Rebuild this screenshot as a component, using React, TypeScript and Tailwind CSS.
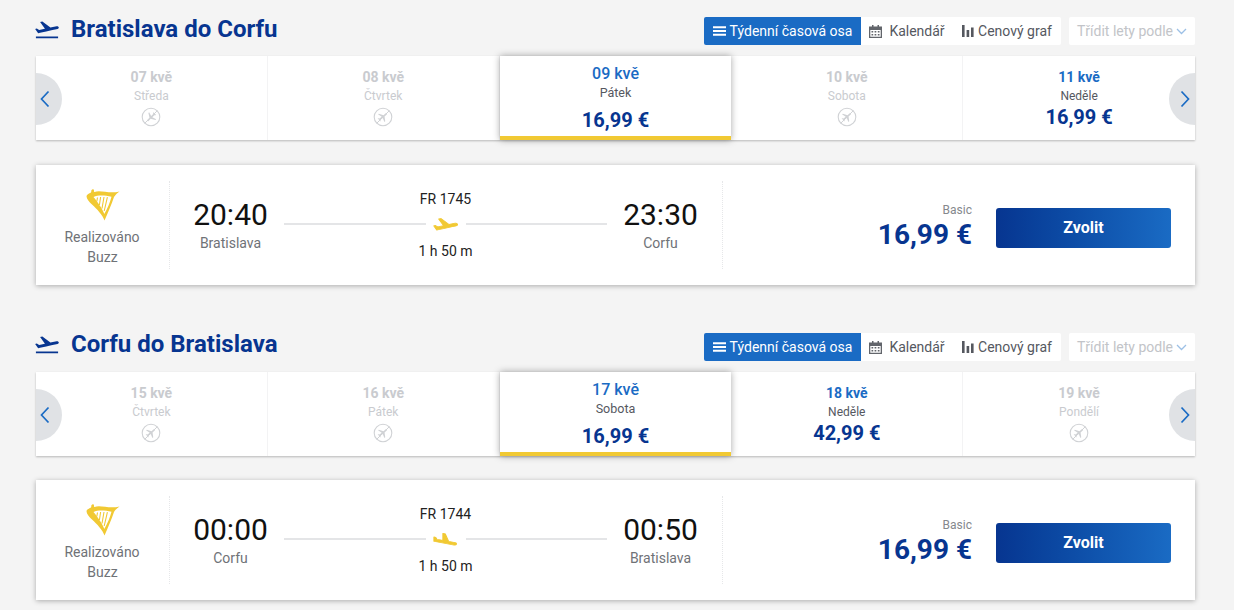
import React from "react";

const F = "font-['Roboto',sans-serif]";

function Harp() {
  return (
    <svg width="34" height="34" viewBox="0 0 34 34" fill="none">
      <path d="M0.5 9 C1 7.5 3 6.5 5 5.5 C5.5 4.5 5 3.7 5.6 2.9 C6.4 1.9 8 2.2 8 3.5 C8 4.2 7.6 4.7 8.6 5 C14 2.6 24 7.2 33.5 4.4 C31 6.2 29.5 7.6 28 10 C25.5 17.5 22 25.5 18.5 33.5 C16.5 28 11 22 6 17.5 C3 14.8 0.5 12 0.5 9Z" fill="#f1c933" />
      <path d="M7.5 10 C12 7.8 19 8.2 25.5 9.8 C24 15.5 21.5 21.5 18.3 27 C16.5 22 12 15.5 7.5 10Z" fill="#fff" />
      <path d="M11.5 10.5 L10.8 14.5 M14.6 10 L13.4 18 M18 10 L16 21.5 M21.4 10.2 L18.2 24" stroke="#f1c933" strokeWidth="1.1" />
    </svg>
  );
}

function PlaneTakeoff({ color }: { color: string }) {
  return (
    <svg width="28" height="23" viewBox="0 0 24 24" preserveAspectRatio="none" fill={color} className="ml-[-3px]">
      <path d="M2.5 19.4h19v1.6h-19zm19.57-9.76c-.21-.8-1.04-1.28-1.84-1.06L14.92 10l-6.9-6.43-1.93.51 4.14 7.17-4.97 1.33-1.97-1.54-1.45.39 1.82 3.16.77 1.33 1.6-.43 5.31-1.42 4.35-1.16L21 11.49c.81-.23 1.28-1.05 1.07-1.85z" />
    </svg>
  );
}

function YellowPlane({ down }: { down?: boolean }) {
  return down ? (
    <svg width="25" height="13" viewBox="2 1.5 20.5 15.5" preserveAspectRatio="none" fill="#f1c933" stroke="#f1c933" strokeWidth="0.9" strokeLinejoin="round">
      <path d="M9.68 13.27l4.35 1.16 5.31 1.42c.8.21 1.62-.26 1.84-1.06.21-.8-.26-1.62-1.06-1.84l-5.31-1.42-2.76-9.02L10.12 2v8.28L5.15 8.95l-.93-2.32-1.45-.39v5.17l1.6.43 5.31 1.43z" />
    </svg>
  ) : (
    <svg width="25" height="13" viewBox="1.2 3 21.4 14" preserveAspectRatio="none" fill="#f1c933" stroke="#f1c933" strokeWidth="0.9" strokeLinejoin="round">
      <path d="M22.07 9.64c-.21-.8-1.04-1.28-1.84-1.06L14.92 10l-6.9-6.43-1.93.51 4.14 7.17-4.97 1.33-1.97-1.54-1.45.39 1.82 3.16.77 1.33 1.6-.43 5.31-1.42 4.35-1.16L21 11.49c.81-.23 1.28-1.05 1.07-1.85z" />
    </svg>
  );
}

function NoFlight({ rotate }: { rotate: number }) {
  return (
    <svg width="20" height="20" viewBox="0 0 20 20" fill="none" className="block">
      <circle cx="10" cy="10" r="8.8" stroke="#d0d2d5" strokeWidth="1.1" />
      <g transform={`rotate(${rotate} 10 10) translate(3.7 3.7) scale(0.525)`}>
        <path d="M21 16v-2l-8-5V3.5c0-.83-.67-1.5-1.5-1.5S10 2.67 10 3.5V9l-8 5v2l8-2.5V19l-2 1.5V22l3.5-1 3.5 1v-1.5L13 19v-5.5l8 2.5z" fill="#d0d2d5" />
      </g>
      <path d="M16.3 3.7 L3.7 16.3" stroke="#d0d2d5" strokeWidth="1" />
    </svg>
  );
}

type Day = { date: string; day: string; price?: string; active?: boolean; icon?: number };

function DayCell({ d, last }: { d: Day; last?: boolean }) {
  if (d.active) {
    return (
      <div className="relative z-10 flex flex-col items-center border-b-4 border-[#f1c933] bg-white shadow-[0_0_7px_rgba(0,0,0,0.35)]">
        <div className="mt-[8px] text-[16px] leading-[20px] font-medium text-[#1a6bc4]">{d.date}</div>
        <div className="mt-[1px] text-[12.5px] leading-[16px] text-[#55585f]">{d.day}</div>
        <div className="mt-[7px] text-[20px] leading-[24px] font-bold text-[#073590]">{d.price}</div>
      </div>
    );
  }
  const priced = !!d.price;
  return (
    <div className={`flex flex-col items-center bg-white ${last ? "" : "border-r border-[#f3f3f4]"}`}>
      <div className={`mt-[12px] text-[14px] leading-[18px] font-bold ${priced ? "text-[#1a6bc4]" : "text-[#c9cbcf]"}`}>{d.date}</div>
      <div className={`mt-[1px] text-[12px] leading-[18px] ${priced ? "text-[#55585f]" : "text-[#c9cbcf]"}`}>{d.day}</div>
      {priced ? (
        <div className="text-[20px] leading-[24px] font-bold text-[#073590]">{d.price}</div>
      ) : (
        <div className="mt-[2px]">
          <NoFlight rotate={d.icon ?? 50} />
        </div>
      )}
    </div>
  );
}

function Arrow({ right }: { right?: boolean }) {
  return (
    <div className={`absolute top-[17px] z-20 flex h-[52px] w-[26px] items-center bg-[#e0e2e5] ${right ? "right-0 justify-end rounded-l-[26px] pr-[4px]" : "left-0 justify-start rounded-r-[26px] pl-[3px]"}`}>
      <svg width="12" height="18" viewBox="0 0 12 18" fill="none" stroke="#1a6bc4" strokeWidth="1.7">
        {right ? <path d="M2.5 1.5 L9.5 9 L2.5 16.5" /> : <path d="M9.5 1.5 L2.5 9 L9.5 16.5" />}
      </svg>
    </div>
  );
}

function Toolbar() {
  return (
    <div className="flex items-center text-[14px] text-[#55585f]">
      <div className="flex h-[28px] w-[157px] items-center justify-center gap-[4px] rounded-l-[2px] bg-[#1a6bc4] text-white">
        <svg width="13" height="12" viewBox="0 0 13 12" fill="#fff"><path d="M0 1.2h13v2H0zM0 5h13v2H0zM0 8.8h13v2H0z" /></svg>
        <span>Týdenní časová osa</span>
      </div>
      <div className="flex h-[28px] w-[92px] items-center justify-center gap-[7px] bg-white">
        <svg width="13" height="13" viewBox="0 0 13 13" fill="#62656b"><path d="M3 0h1.5v1.5h4V0H10v1.5h3V13H0V1.5h3zM1.3 5v6.7h10.4V5zM2.5 6h1.7v1.5H2.5zM5.6 6h1.7v1.5H5.6zM8.8 6h1.7v1.5H8.8zM2.5 9h1.7v1.5H2.5zM5.6 9h1.7v1.5H5.6zM8.8 9h1.7v1.5H8.8z" /></svg>
        <span>Kalendář</span>
      </div>
      <div className="flex h-[28px] w-[108px] items-center justify-center gap-[4px] rounded-r-[2px] bg-white">
        <svg width="12" height="12" viewBox="0 0 12 12" fill="#55585f"><path d="M0 0h2.6v12H0zM4.6 5h2.6v7H4.6zM9 2.6h2.6V12H9z" /></svg>
        <span>Cenový graf</span>
      </div>
      <div className="ml-[8px] flex h-[28px] w-[126px] items-center justify-center gap-[3px] rounded-[2px] bg-white text-[#c2c4c8]">
        <span>Třídit lety podle</span>
        <svg width="11" height="7" viewBox="0 0 11 7" fill="none" stroke="#9cc0e6" strokeWidth="1.3"><path d="M1 1 L5.5 5.5 L10 1" /></svg>
      </div>
    </div>
  );
}

type Flight = { no: string; dep: string; arr: string; from: string; to: string; down?: boolean };

function FlightCard({ f }: { f: Flight }) {
  return (
    <div className={`flex h-[120px] items-center bg-white shadow-[0_1px_5px_rgba(0,0,0,0.3)] ${f.down ? "mt-[24px]" : "mt-[25px]"}`}>
      <div className="flex h-[88px] w-[134px] shrink-0 flex-col items-center border-r border-dotted border-[#e6e7e9] text-[14px] leading-[20px] text-[#6f7277]">
        <div className="my-[6px] h-[34px]"><Harp /></div>
        <div className="pr-[1px]">Realizováno</div>
        <div>Buzz</div>
      </div>
      <div className="flex h-[88px] w-[553px] shrink-0 items-start border-r border-dotted border-[#e6e7e9] pr-[24px] pl-[23px]">
        <div className="mt-[16px] w-[75px] text-center">
          <div className="text-[30px] leading-[36px] text-[#111]">{f.dep}</div>
          <div className="mt-[1px] text-[14px] leading-[18px] text-[#6f7277]">{f.from}</div>
        </div>
        <div className="mx-[16px] mt-[9px] flex flex-1 flex-col items-center text-[14px] text-[#222]">
          <div className="leading-[18px]">{f.no}</div>
          <div className="mt-[7px] flex h-[18px] w-full items-center">
            <div className="h-[2px] flex-1 bg-[#e4e5e7]" />
            <div className="flex w-[40px] justify-center"><YellowPlane down={f.down} /></div>
            <div className="h-[2px] flex-1 bg-[#e4e5e7]" />
          </div>
          <div className="mt-[9px] leading-[18px]">1 h 50 m</div>
        </div>
        <div className="mt-[16px] w-[75px] text-center">
          <div className="text-[30px] leading-[36px] text-[#111]">{f.arr}</div>
          <div className="mt-[1px] text-[14px] leading-[18px] text-[#6f7277]">{f.to}</div>
        </div>
      </div>
      <div className="flex h-[88px] flex-1 items-start justify-end pr-[24px]">
        <div className="mt-[22px] text-right">
          <div className="text-[12px] leading-[14px] text-[#85888d]">Basic</div>
          <div className="text-[28px] leading-[36px] font-bold text-[#073590]">16,99 €</div>
        </div>
        <button className="mt-[27px] ml-[24px] h-[40px] w-[175px] rounded-[3px] bg-gradient-to-r from-[#073590] to-[#1a6bc4] text-[16px] font-bold text-white">Zvolit</button>
      </div>
    </div>
  );
}

function Section({ title, days, flight }: { title: string; days: Day[]; flight: Flight }) {
  return (
    <section className="pb-[45px]">
      <div className={`flex items-start justify-between ${flight.down ? "h-[42px]" : "h-[41px]"}`}>
        <div className="flex items-center">
          <PlaneTakeoff color="#073590" />
          <h2 className="ml-[10px] text-[24px] leading-[28px] font-bold text-[#073590]">{title}</h2>
        </div>
        <div className={flight.down ? "mt-[3px]" : "mt-[2px]"}><Toolbar /></div>
      </div>
      <div className="relative grid h-[84px] grid-cols-5 bg-white shadow-[0_1px_2px_rgba(0,0,0,0.25)]">
        {days.map((d, i) => <DayCell key={d.date} d={d} last={i === 4} />)}
        <Arrow />
        <Arrow right />
      </div>
      <FlightCard f={flight} />
    </section>
  );
}

export default function App() {
  return (
    <div className={`h-[610px] w-[1234px] overflow-hidden bg-[#f4f4f4] pt-[15px] pl-[36px] ${F}`}>
      <div className="w-[1159px]">
        <Section
          title="Bratislava do Corfu"
          days={[
            { date: "07 kvě", day: "Středa", icon: 225 },
            { date: "08 kvě", day: "Čtvrtek", icon: 50 },
            { date: "09 kvě", day: "Pátek", price: "16,99 €", active: true },
            { date: "10 kvě", day: "Sobota", icon: 50 },
            { date: "11 kvě", day: "Neděle", price: "16,99 €" },
          ]}
          flight={{ no: "FR 1745", dep: "20:40", arr: "23:30", from: "Bratislava", to: "Corfu" }}
        />
        <Section
          title="Corfu do Bratislava"
          days={[
            { date: "15 kvě", day: "Čtvrtek", icon: 50 },
            { date: "16 kvě", day: "Pátek", icon: 50 },
            { date: "17 kvě", day: "Sobota", price: "16,99 €", active: true },
            { date: "18 kvě", day: "Neděle", price: "42,99 €" },
            { date: "19 kvě", day: "Pondělí", icon: 50 },
          ]}
          flight={{ no: "FR 1744", dep: "00:00", arr: "00:50", from: "Corfu", to: "Bratislava", down: true }}
        />
      </div>
    </div>
  );
}
